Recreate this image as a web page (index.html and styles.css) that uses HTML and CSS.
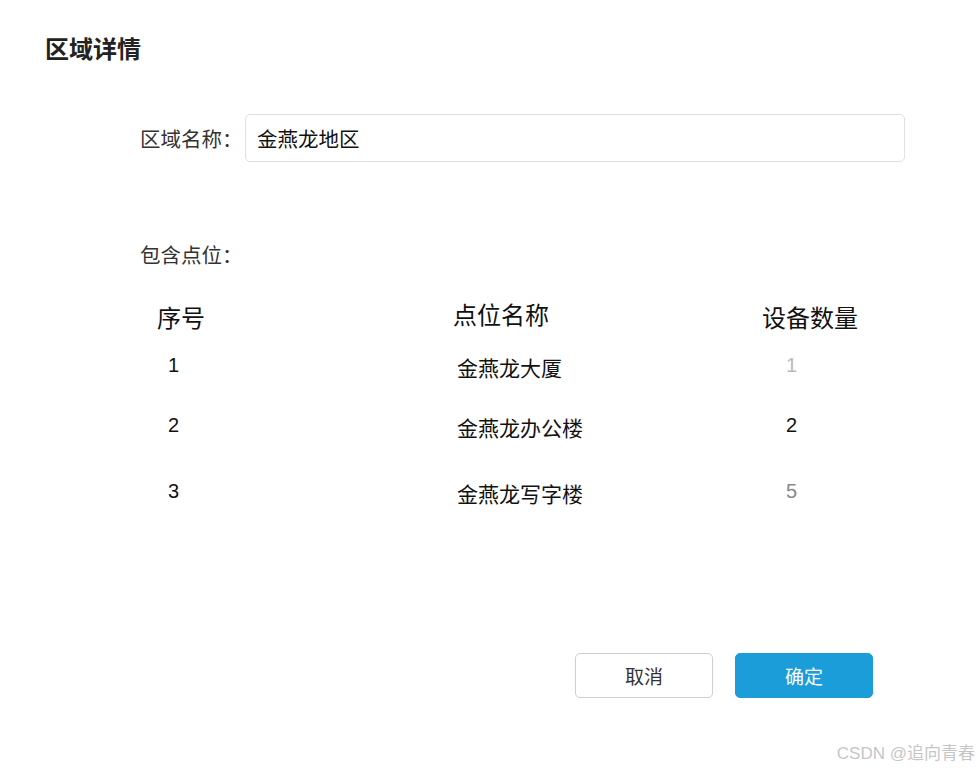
FILE: index.html
```html
<!DOCTYPE html>
<html lang="zh-CN">
<head>
<meta charset="utf-8">
<title>区域详情</title>
<link rel="stylesheet" href="styles.css">
</head>
<body>
<div class="page">
  <h1 class="title">区域详情</h1>
  <div class="form">
    <div class="field">
      <span class="label">区域名称：</span>
      <div class="input">金燕龙地区</div>
    </div>
    <div class="section-label">包含点位：</div>
    <div class="table">
      <div class="th c1">序号</div>
      <div class="th c2 up">点位名称</div>
      <div class="th c3">设备数量</div>

      <div class="td c1 num r1">1</div>
      <div class="td c2 name r1">金燕龙大厦</div>
      <div class="td c3 num count light r1">1</div>

      <div class="td c1 num r2">2</div>
      <div class="td c2 name r2">金燕龙办公楼</div>
      <div class="td c3 num count r2">2</div>

      <div class="td c1 num r3">3</div>
      <div class="td c2 name r3">金燕龙写字楼</div>
      <div class="td c3 num count mid r3">5</div>
    </div>
  </div>
  <div class="actions">
    <button class="btn btn-cancel">取消</button>
    <button class="btn btn-ok">确定</button>
  </div>
</div>
<div class="watermark">CSDN @追向青春</div>
</body>
</html>
```
FILE: styles.css
```css
* { box-sizing: border-box; }
html, body {
  margin: 0;
  padding: 0;
  background: #fff;
}
body {
  width: 979px;
  height: 772px;
  position: relative;
  overflow: hidden;
  font-family: "Noto Sans CJK SC", "Liberation Sans", sans-serif;
  color: #333;
}
.page {
  padding: 31px 0 0 45px;
}
.title {
  margin: 0;
  font-size: 24px;
  font-weight: 700;
  line-height: 34px;
  color: #222;
}
.form {
  margin-left: 95px;
  width: 765px;
  margin-top: 49px;
}
.field {
  display: flex;
  align-items: center;
  height: 48px;
}
.label {
  width: 105px;
  font-size: 20.5px;
  color: #333;
}
.input {
  flex: 1;
  height: 48px;
  border: 1px solid #dcdfe6;
  border-radius: 5px;
  padding: 0 11px;
  display: flex;
  align-items: center;
  font-size: 20.5px;
  color: #111;
}
.section-label {
  margin-top: 77px;
  font-size: 20.5px;
  line-height: 30px;
  color: #333;
}
.table {
  margin-top: 22px;
  display: grid;
  grid-template-columns: 260px 300px 205px;
  grid-template-rows: 50px 52px 68px 64px;
  align-items: center;
}
.th {
  font-size: 24px;
  color: #111;
}
.th.c1 { padding-left: 17px; }
.th.c2 { padding-left: 53px; }
.th.c3 { padding-left: 62px; }
.th.up { transform: translateY(-3px); }
.td { color: #111; }
.num {
  font-family: "Liberation Sans", sans-serif;
  font-size: 20px;
}
.td.c1 { padding-left: 28px; }
.td.name { padding-left: 57px; font-size: 21px; }
.td.count { padding-left: 86px; }
.td.c1, .td.count { transform: translateY(-2px); }
.light { color: #bbb !important; }
.mid { color: #888 !important; }
.actions {
  display: flex;
  justify-content: flex-end;
  gap: 22px;
  padding-right: 106px;
  margin-top: 128px;
}
.btn {
  width: 138px;
  height: 45px;
  border-radius: 5px;
  font-family: "Noto Sans CJK SC", sans-serif;
  font-size: 19px;
  cursor: pointer;
}
.btn-cancel {
  background: #fff;
  border: 1px solid #cfcfcf;
  color: #333;
}
.btn-ok {
  background: #1a9dd8;
  border: 1px solid #1a9dd8;
  color: #fff;
}
.watermark {
  position: absolute;
  right: 4px;
  bottom: 8px;
  font-size: 17px;
  color: #c6c6c6;
  font-family: "Liberation Sans", "Noto Sans CJK SC", sans-serif;
}
```
